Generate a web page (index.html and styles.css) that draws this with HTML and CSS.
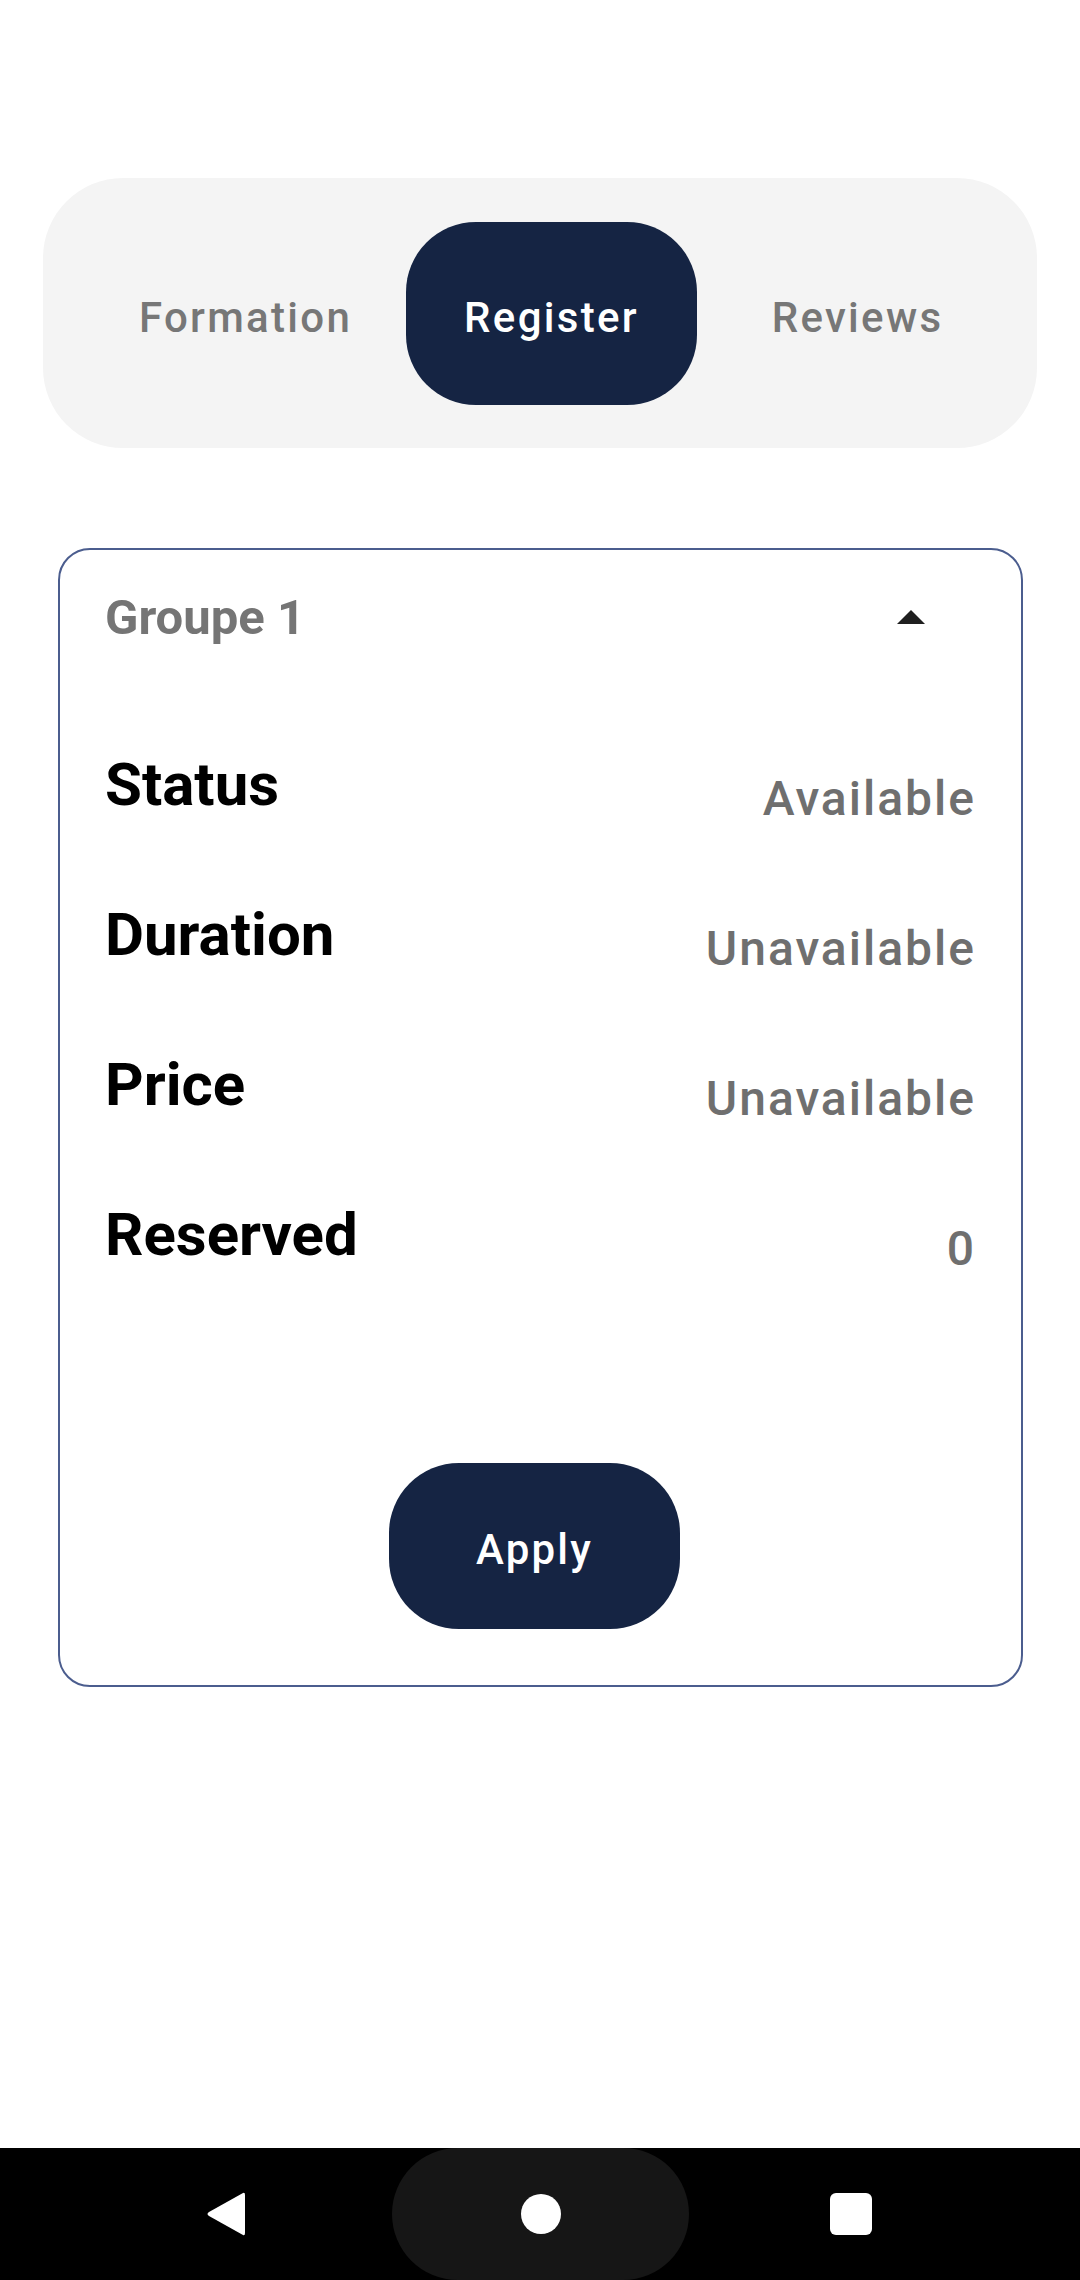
FILE: index.html
```html
<!DOCTYPE html>
<html>
<head>
<meta charset="utf-8">
<link rel="stylesheet" href="styles.css">
</head>
<body>
<div class="screen">
  <div class="tabs">
    <div class="tab">Formation</div>
    <div class="tab active">Register</div>
    <div class="tab">Reviews</div>
  </div>

  <div class="card">
    <div class="card-head">
      <span class="group-title">Groupe 1</span>
      <span class="caret"></span>
    </div>
    <div class="row"><span class="label">Status</span><span class="value">Available</span></div>
    <div class="row"><span class="label">Duration</span><span class="value">Unavailable</span></div>
    <div class="row"><span class="label">Price</span><span class="value">Unavailable</span></div>
    <div class="row"><span class="label">Reserved</span><span class="value">0</span></div>
    <div class="actions">
      <div class="apply">Apply</div>
    </div>
  </div>

  <div class="navbar">
    <svg class="nav-back" width="40" height="46" viewBox="0 0 40 46"><path d="M37 2 Q39 1 39 4 L39 42 Q39 45 37 44 L3 25 Q0 23 3 21 Z" fill="#fff"/></svg>
    <div class="nav-home"><span class="home-dot"></span></div>
    <span class="recents"></span>
  </div>
</div>
</body>
</html>
```
FILE: styles.css
```css
* { box-sizing: border-box; }
html, body { margin: 0; padding: 0; background: #ffffff; }
body { font-family: Roboto, "Noto Sans", "Liberation Sans", sans-serif; }

.screen {
  width: 1080px;
  height: 2280px;
  display: flex;
  flex-direction: column;
  overflow: hidden;
}

.tabs {
  margin: 178px 0 0 43px;
  width: 994px;
  height: 270px;
  background: #f4f4f4;
  border-radius: 80px;
  display: flex;
  align-items: center;
  gap: 15px;
  padding-left: 57px;
}

.tab {
  width: 291px;
  height: 183px;
  border-radius: 70px;
  display: flex;
  align-items: center;
  justify-content: center;
  font-size: 42px;
  font-weight: 500;
  letter-spacing: 2.3px;
  color: #777777;
  padding-top: 9px;
}

.tab.active {
  background: #152443;
  color: #ffffff;
}

.card {
  margin: 100px 0 0 58px;
  width: 965px;
  height: 1139px;
  border: 2px solid #4b5d8e;
  border-radius: 32px;
  padding: 39px 45px 0 45px;
  display: flex;
  flex-direction: column;
}

.card-head {
  display: flex;
  align-items: center;
  justify-content: space-between;
  height: 58px;
  margin-bottom: 103px;
}

.group-title {
  font-size: 49px;
  font-weight: 700;
  line-height: 58px;
  color: #757575;
}

.caret {
  width: 0;
  height: 0;
  border-left: 14px solid transparent;
  border-right: 14px solid transparent;
  border-bottom: 14px solid #1f1f1f;
  margin-right: 51px;
  margin-top: -2px;
}

.row {
  display: flex;
  justify-content: space-between;
  align-items: flex-start;
  height: 150px;
}

.label {
  font-size: 60px;
  font-weight: 700;
  line-height: 70px;
  color: #000000;
}

.value {
  font-size: 48px;
  font-weight: 500;
  line-height: 56px;
  letter-spacing: 2px;
  color: #6f6f6f;
  margin-top: 21px;
}

.actions {
  margin-top: auto;
  margin-bottom: 56px;
  display: flex;
  justify-content: center;
  padding-right: 12px;
}

.apply {
  width: 291px;
  height: 166px;
  border-radius: 70px;
  background: #152443;
  color: #ffffff;
  font-size: 42px;
  font-weight: 500;
  letter-spacing: 2.2px;
  display: flex;
  align-items: center;
  justify-content: center;
  padding-top: 6px;
}

.navbar {
  margin-top: auto;
  height: 132px;
  background: #000000;
  display: flex;
  align-items: center;
  padding-left: 206px;
}

.nav-back {
  display: block;
  margin-right: 146px;
}

.nav-home {
  width: 297px;
  height: 132px;
  border-radius: 66px;
  background: #161616;
  display: flex;
  align-items: center;
  justify-content: center;
  margin-right: 141px;
}

.home-dot {
  width: 40px;
  height: 40px;
  border-radius: 50%;
  background: #ffffff;
}

.recents {
  width: 42px;
  height: 42px;
  border-radius: 6px;
  background: #ffffff;
}
```
